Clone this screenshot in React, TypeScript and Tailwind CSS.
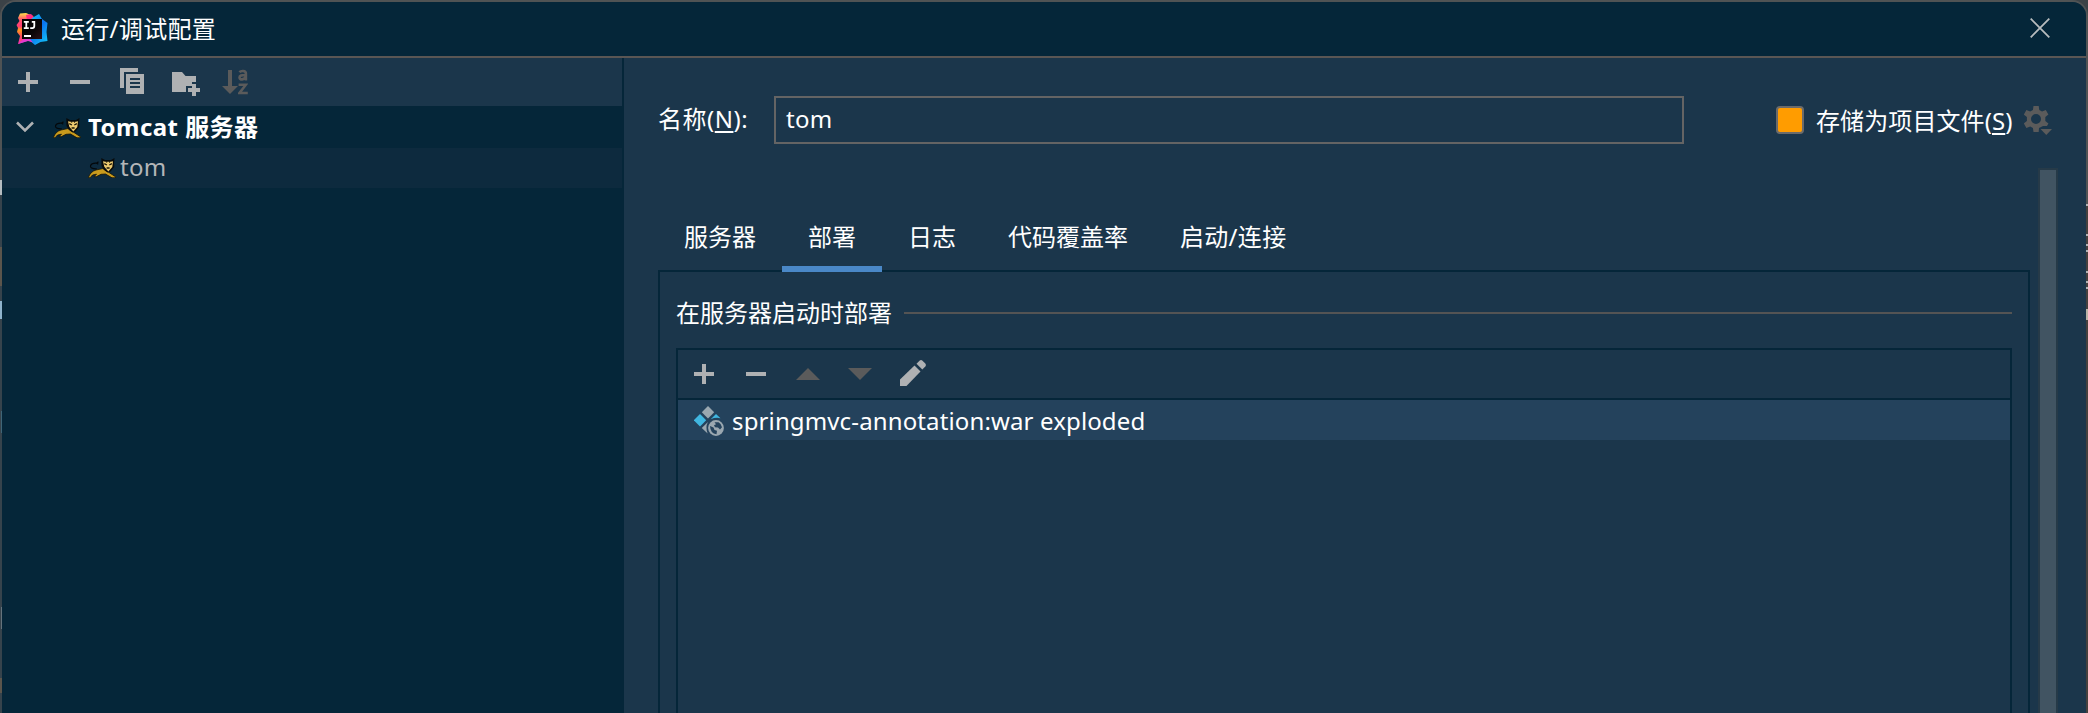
import React from "react";

const Plus = () => (
  <svg width="20" height="20" viewBox="0 0 20 20" fill="#afb1b3" shapeRendering="crispEdges">
    <path d="M8 0h4v8h8v4h-8v8H8v-8H0V8h8z" />
  </svg>
);
const Minus = () => (
  <svg width="20" height="20" viewBox="0 0 20 20" fill="#afb1b3" shapeRendering="crispEdges">
    <path d="M0 8h20v4H0z" />
  </svg>
);
const Copy = () => (
  <svg width="24" height="26" viewBox="0 0 24 26" fill="#afb1b3" shapeRendering="crispEdges">
    <path d="M0 0h18v4H4v16H0z" />
    <path fillRule="evenodd" d="M6 6h18v20H6zM10 10v2h10v-2zM10 14v2h10v-2zM10 18v2h10v-2z" />
  </svg>
);
const FolderPlus = () => (
  <svg width="28" height="24" viewBox="0 0 28 24" fill="#afb1b3">
    <path d="M0 0h10l3.5 4H24v6h-4v4h-6v6H0z" />
    <path d="M20 12h4v4h4v4h-4v4h-4v-4h-4v-4h4z" />
  </svg>
);
const SortAz = () => (
  <span className="flex h-[26px] w-[26px]">
    <svg width="16" height="26" viewBox="0 0 16 26" fill="#5b5b5b">
      <path d="M6 1h4v16h6l-8 8-8-8h6z" />
    </svg>
    <svg width="10" height="26" viewBox="0 0 10 26" fill="none" stroke="#5b5b5b" strokeWidth="2.6">
      <path d="M1.4 3.2C3 1.6 7.9 1.2 7.900 4.600V11.400M7.900 6C3.500 5.800 1.500 6.800 1.500 8.600c0 2.600 5 2.400 6.400-1" />
      <path d="M.6 15.700h7.300L1.500 24H9.800" />
    </svg>
  </span>
);
const Logo = () => (
  <svg width="32" height="32" viewBox="0 0 32 32">
    <defs>
      <linearGradient id="warm" x1="0.3" y1="0" x2="0.3" y2="1">
        <stop offset="0" stopColor="#fde04a" />
        <stop offset="0.2" stopColor="#ff5a68" />
        <stop offset="0.42" stopColor="#ff3a78" />
        <stop offset="0.55" stopColor="#ff9a1c" />
        <stop offset="0.75" stopColor="#fb4a5e" />
        <stop offset="1" stopColor="#fb2fb0" />
      </linearGradient>
      <linearGradient id="cool" x1="0" y1="0" x2="0.7" y2="1">
        <stop offset="0" stopColor="#12d3f4" />
        <stop offset="0.55" stopColor="#0b72f0" />
        <stop offset="1" stopColor="#12b8f6" />
      </linearGradient>
      <linearGradient id="tile" x1="0" y1="0" x2="1" y2="1">
        <stop offset="0" stopColor="#000" />
        <stop offset="0.6" stopColor="#0a0608" />
        <stop offset="1" stopColor="#2a1119" />
      </linearGradient>
    </defs>
    <path d="M4 .5l6-.5 7 3v23l-9 3-6 2 2-8-3-4 1-4-1.500-3L3.500 8 2 5z" fill="url(#warm)" />
    <path d="M10 2l5-1 3 3-1 4-6-1z" fill="#ff2d7f" />
    <path d="M16 5l7-4 3 5 5.500 4-1 9 1 9-7 1-5.500 3-6-5z" fill="url(#cool)" />
    <path d="M8 26h6l3 3.500-5-1.500-10 3z" fill="#e23ad0" />
    <path d="M6 6h20v20H6z" fill="url(#tile)" />
    <path d="M7.800 8.800h5M10.300 8.800v6.400M7.800 15.200h5M15.800 8.800h2.500v4.300q0 2-1.900 2h-2.200" stroke="#fff" strokeWidth="1.800" fill="none" />
    <path d="M8 22h7v1.900H8z" fill="#fff" />
  </svg>
);
const Tomcat = () => (
  <svg width="28" height="20" viewBox="0 0 28 20">
    <path d="M9 11C4 10.800 1.700 9.800 2.600 7.600 3.500 5.400 6 5 8.500 5.200M10.500 3.800L8.500 5.200l1.800.9" fill="none" stroke="#04080b" strokeWidth="1.200" />
    <path d="M.3 19.700Q2.500 13.500 8 12l7-1.500 4.500 3 8 5.300v1h-3.500l-6.500-3.800-4.500.3L8.500 18.600 6 18.800l2.500-2.600-4 .8-2.400 2.800z" fill="#c99b1d" stroke="#14130a" strokeWidth=".8" />
    <path d="M13.300 0l3.700 2h6l3.500-2-.4 5 .2 4-3.800 4.500-3 1-3.500-2.500-2.500-4z" fill="#090b0b" />
    <path d="M15 3.200l2.500.5h5l2.500-.5-.7 5.800-4 4.400-4-4.600z" fill="#ecc96e" />
    <path d="M16.300 5.700l2.600 1.300M23.900 5.700L21.300 7M18.600 10h3" stroke="#1a1406" strokeWidth="1.300" />
    <path d="M18.700 3v1.800M21.500 3v1.800" stroke="#1a1406" strokeWidth=".8" />
  </svg>
);
const Pencil = () => (
  <svg width="26" height="26" viewBox="0 0 26 26" fill="#afb1b3">
    <path d="M14.500 5.500l6 6L6.500 26H0v-6.500z" />
    <path d="M16.500 3.700L19.500.7q1.500-1.200 3 0l2.800 2.800q1.200 1.500 0 3l-3 3z" />
  </svg>
);
const Artifact = () => (
  <svg width="30" height="30" viewBox="0 0 30 30">
    <path d="M14 0l6.200 6.200L14 12.400 7.800 6.200z" fill="#9aa7b0" />
    <path d="M6 8l6.200 6.200L6 20.400-.2 14.200z" fill="#40b6e0" />
    <path d="M22 8l4.500 4.200q-5-1-9.800 1z" fill="#40b6e0" />
    <path d="M13.900 16q-2.800 5-.3 11.500L7.800 21.900z" fill="#9aa7b0" />
    <circle cx="22" cy="22" r="7.900" fill="#9aa7b0" />
    <path d="M16 20l3.500 1.500 1 2.500 2.500.800-.5 3.500q-6.200-.8-6.500-8.300zM20.500 16.200h4q3 1.600 3.500 5l-2 2.300-2-2-3-.3-1-2 2-1z" fill="#24425c" />
  </svg>
);
const Gear = () => (
  <svg width="28" height="30" viewBox="0 0 28 30" fill="#5b5b5b">
    <path
      fillRule="evenodd"
      d="M9.500 0h5.200l.6 4 2.700 1.500 3.800-1.500 2.600 4.500-3.100 2.600v3.800l3.100 2.600-1.400 2.500h-4l-4 2-.3 4H9.500l-.6-4L6.200 20.500 2.400 22-.2 17.500l3.100-2.600v-3.800L-.2 8.500 2.400 4l3.800 1.500L8.900 4zM12 8a5 5 0 1 0 0 10 5 5 0 0 0 0-10z"
    />
    <path d="M16.500 23H28l-5.700 6z" />
  </svg>
);

const tabs = [
  { label: "服务器", cls: "w-[124px] pl-[26px]" },
  { label: "部署", cls: "w-[100px] pl-[26px] border-b-[6px] border-[#4a88c7]" },
  { label: "日志", cls: "w-[100px] pl-[26px]" },
  { label: "代码覆盖率", cls: "w-[172px] pl-[26px]" },
  { label: "启动/连接", cls: "w-[160px] pl-[26px] tracking-[0.3px]" },
];

export default function App() {
  return (
    <div className="relative h-[713px] w-[2088px] overflow-hidden bg-[#3b4247] font-['Noto_Sans','Noto_Sans_CJK_SC',sans-serif] text-[24px] leading-[32px] text-white">
      <div className="flex h-[720px] w-[2088px] flex-col overflow-hidden rounded-t-[16px] border-2 border-[#505354] bg-[#1b364b]">
        <header className="flex h-[56px] shrink-0 items-center border-b-2 border-[#5a5654] bg-[#052639] pl-[14px] pr-[36px]">
          <Logo />
          <span className="ml-[13px] grow tracking-[0.3px]">运行/调试配置</span>
          <svg className="-mt-[2px]" width="20" height="20" viewBox="0 0 20 20" stroke="#b8bcbe" strokeWidth="1.800">
            <path d="M.7.7l18.600 18.600M19.300.7L.7 19.300" />
          </svg>
        </header>
        <div className="flex grow">
          <aside className="flex w-[622px] shrink-0 flex-col border-r-2 border-[#052639] bg-[#052639]">
            <div className="flex h-[48px] items-center bg-[#1b364b] pl-[16px]">
              <Plus />
              <span className="ml-8"><Minus /></span>
              <span className="ml-[30px] -mt-[2px]"><Copy /></span>
              <span className="ml-[28px] mt-[4px]"><FolderPlus /></span>
              <span className="ml-[22px]"><SortAz /></span>
            </div>
            <div className="flex h-[42px] items-center pl-[14px] font-bold">
              <svg width="18" height="12" viewBox="0 0 18 12" fill="none" stroke="#afb1b3" strokeWidth="2.600">
                <path d="M1 1.500l8 8 8-8" />
              </svg>
              <span className="ml-[19px] mt-[2px]"><Tomcat /></span>
              <span className="ml-[7px] tracking-[0.45px]">Tomcat 服务器</span>
            </div>
            <div className="flex h-[40px] items-center bg-[#0d2a3e] pl-[86px] text-[#b4b6b8]">
              <Tomcat />
              <span className="-mt-[2px] ml-[4px] tracking-[0.3px]">tom</span>
            </div>
          </aside>
          <main className="flex grow flex-col pl-[34px]">
            <div className="mt-[38px] flex h-[48px] shrink-0 items-center">
              <span className="-mt-[2px] w-[116px] tracking-[0.5px]">
                名称(<span className="underline decoration-2 underline-offset-[3px]">N</span>):
              </span>
              <div className="flex h-[48px] w-[910px] items-center border-2 border-[#646464] pl-[10px] pb-[2px] tracking-[0.3px]">tom</div>
              <span className="ml-[92px] h-7 w-7 rounded-[4px] border-2 border-[#6b6b6b] bg-[#ff9c00]" />
              <span className="ml-[12px] mt-px w-[208px] whitespace-nowrap tracking-[0.1px]">
                存储为项目文件(<span className="underline decoration-2 underline-offset-[3px]">S</span>)
              </span>
              <span className="mt-[2px]"><Gear /></span>
            </div>
            <div className="flex grow">
              <div className="flex w-[1372px] flex-col pt-[62px]">
                <div className="z-10 -mb-[2px] flex h-[66px]">
                  {tabs.map((t) => (
                    <div key={t.label} className={`box-border h-[66px] whitespace-nowrap pt-[15px] ${t.cls}`}>{t.label}</div>
                  ))}
                </div>
                <section className="flex grow flex-col border-2 border-[#052639] px-4 pt-[25px]">
                  <div className="flex items-center">
                    <span className="w-[228px]">在服务器启动时部署</span>
                    <span className="h-[2px] grow bg-[#545454]" />
                  </div>
                  <div className="mt-[19px] flex grow flex-col border-2 border-[#052639]">
                    <div className="flex h-[50px] items-center border-b-2 border-[#052639] pl-[16px]">
                      <Plus />
                      <span className="ml-8"><Minus /></span>
                      <svg className="ml-[30px]" width="24" height="12" viewBox="0 0 24 12" fill="#5b5b5b"><path d="M0 12L12 0l12 12z" /></svg>
                      <svg className="ml-[28px]" width="24" height="12" viewBox="0 0 24 12" fill="#5b5b5b"><path d="M0 0h24L12 12z" /></svg>
                      <span className="-mt-[2px] ml-[28px]"><Pencil /></span>
                    </div>
                    <div className="flex h-[40px] items-center bg-[#24425c] pl-[16px]">
                      <span className="mt-[2px]"><Artifact /></span>
                      <span className="ml-[8px] mt-px tracking-[0.13px]">springmvc-annotation:war exploded</span>
                    </div>
                  </div>
                </section>
              </div>
              <div className="ml-[8px] mt-[24px] w-5 border-2 border-[#263a48] bg-[#415462]" />
            </div>
          </main>
        </div>
      </div>
      <div className="absolute left-0 top-[180px] flex h-[533px] w-[2px] flex-col bg-[#36434c]">
        <div className="h-[15px] bg-[#b5bcc0]" />
        <div className="mt-[52px] h-[39px] bg-[#5b554c]" />
        <div className="mt-[15px] h-[18px] bg-[#8fb3cc]" />
        <div className="ml-px mt-[92px] h-[22px] bg-[#3f6577]" />
        <div className="ml-px mt-[174px] h-[22px] bg-[#65737c]" />
        <div className="mt-[49px] h-[15px] bg-[#5b554c]" />
      </div>
      <div className="absolute right-0 top-[204px] flex h-[509px] w-[2px] flex-col bg-[#44413f]">
        <div className="h-[2px] bg-[#b0b3b5]" />
        <div className="mt-[28px] h-[2px] bg-[#b0b3b5]" />
        <div className="mt-[8px] h-[2px] bg-[#b0b3b5]" />
        <div className="mt-[4px] h-[2px] bg-[#b0b3b5]" />
        <div className="mt-[19px] h-[2px] bg-[#b0b3b5]" />
        <div className="mt-[8px] h-[2px] bg-[#b0b3b5]" />
        <div className="mt-[4px] h-[2px] bg-[#b0b3b5]" />
        <div className="mt-[20px] h-[11px] bg-[#b9b3a6]" />
      </div>
    </div>
  );
}
